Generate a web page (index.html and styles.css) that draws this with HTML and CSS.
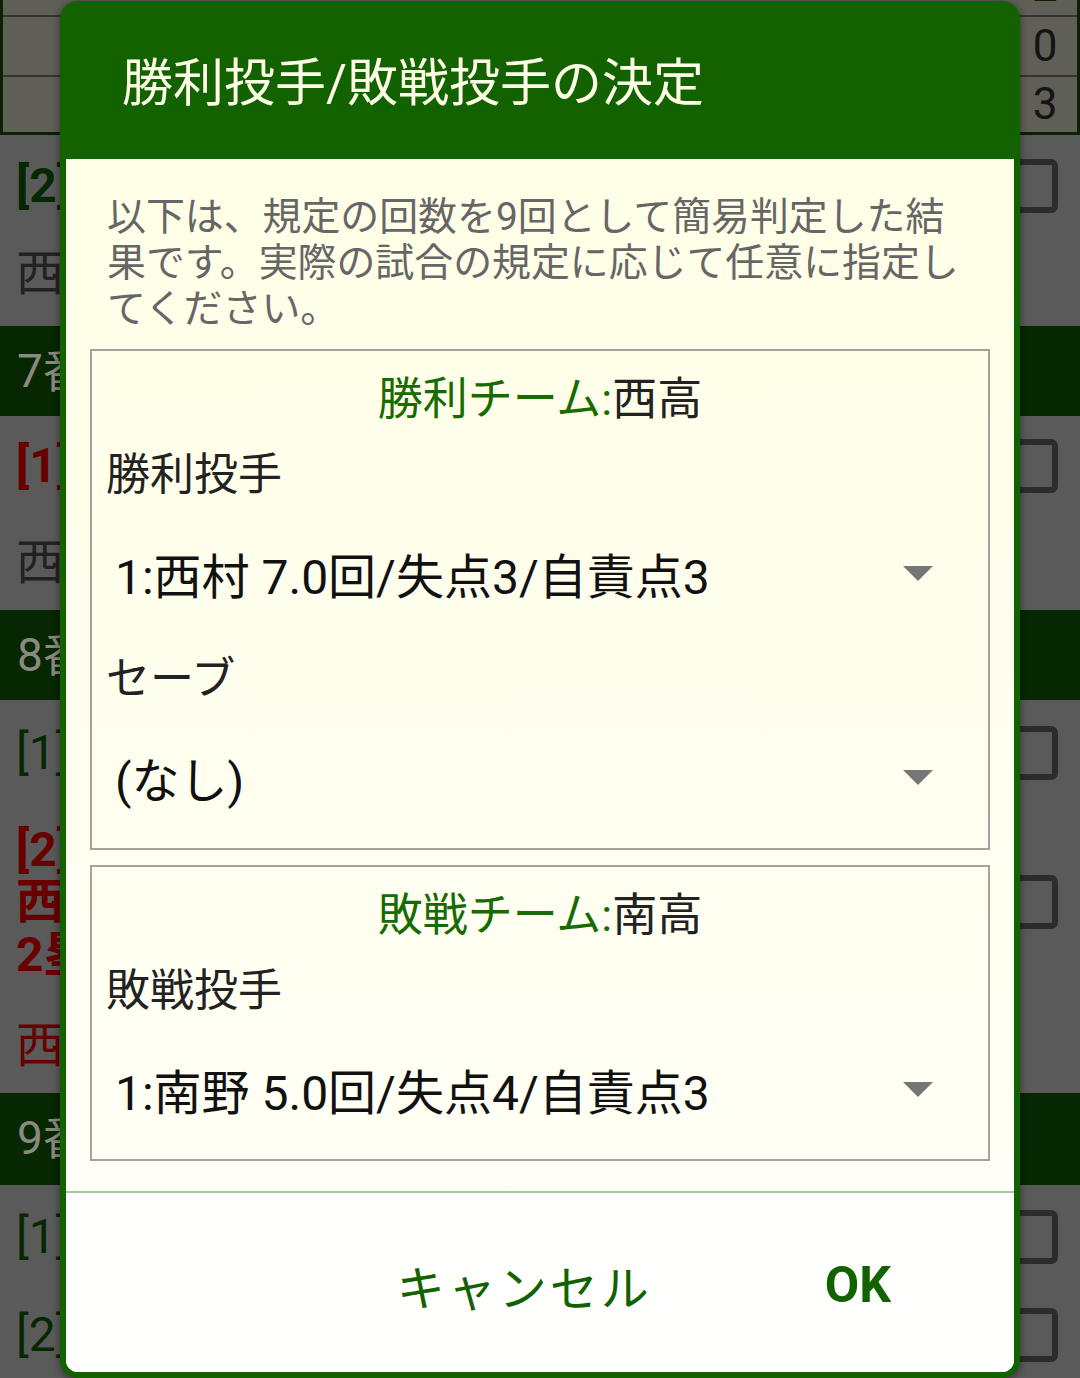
FILE: index.html
```html
<!DOCTYPE html>
<html lang="ja">
<head>
<meta charset="utf-8">
<title>勝利投手/敗戦投手の決定</title>
<link rel="stylesheet" href="styles.css">
</head>
<body>
<div class="screen">
  <div class="score">
    <div class="srow srow-top"><span class="cell-r"><span class="peek">2</span></span></div>
    <div class="srow srow-mid"><span class="cell-r">0</span></div>
    <div class="srow srow-bot"><span class="cell-r">3</span></div>
  </div>

  <div class="block block-a">
    <div class="line"><span class="t bold c-green">[2] 西村</span><span class="cb"></span></div>
    <div class="line mt-36"><span class="t c-dark">西高 投手</span></div>
  </div>
  <div class="band">7番 打者</div>

  <div class="block block-b">
    <div class="line"><span class="t bold c-red">[1] 南野</span><span class="cb"></span></div>
    <div class="line mt-45"><span class="t c-dark">西高 捕手</span></div>
  </div>
  <div class="band">8番 打者</div>

  <div class="block block-c">
    <div class="line"><span class="t c-green">[1] 西川</span><span class="cb"></span></div>
    <div class="line mt-45"><span class="t bold c-red">[2] 南田</span></div>
    <div class="line"><span class="t bold c-red">西高</span><span class="cb"></span></div>
    <div class="line mt-1"><span class="t bold c-red">2塁打</span></div>
    <div class="line mt-39"><span class="t c-red">西高 二塁</span></div>
  </div>
  <div class="band band-9">9番 打者</div>

  <div class="block block-d">
    <div class="line"><span class="t c-green">[1] 西山</span><span class="cb"></span></div>
    <div class="line mt-46"><span class="t c-green">[2] 南原</span><span class="cb"></span></div>
  </div>
</div>

<div class="dialog">
  <div class="dlg-title">勝利投手/敗戦投手の決定</div>
  <div class="dlg-body">
    <p class="msg">以下は、規定の回数を9回として簡易判定した結果です。実際の試合の規定に応じて任意に指定してください。</p>

    <div class="box box-1">
      <div class="box-head"><span class="win">勝利チーム:</span>西高</div>
      <div class="label">勝利投手</div>
      <div class="select"><span>1:西村 7.0回/失点3/自責点3</span><span class="arrow"></span></div>
      <div class="label">セーブ</div>
      <div class="select"><span>(なし)</span><span class="arrow"></span></div>
    </div>

    <div class="box box-2">
      <div class="box-head"><span class="win">敗戦チーム:</span>南高</div>
      <div class="label">敗戦投手</div>
      <div class="select"><span>1:南野 5.0回/失点4/自責点3</span><span class="arrow"></span></div>
    </div>

    <div class="divider"></div>
    <div class="footer">
      <span class="btn btn-cancel">キャンセル</span>
      <span class="btn btn-ok">OK</span>
    </div>
  </div>
</div>
</body>
</html>
```
FILE: styles.css
```css
* {
  box-sizing: border-box;
  margin: 0;
  padding: 0;
}

html, body {
  width: 1080px;
  height: 1378px;
  overflow: hidden;
}

body {
  position: relative;
  background: #5a5a5a;
  font-family: Roboto, "Noto Sans CJK JP", sans-serif;
}

/* ---------- background app screen (dimmed) ---------- */
.score {
  height: 135px;
  background: #5f5e57;
  border: 3px solid #0b2100;
  border-top: 0;
}

.srow {
  display: flex;
  justify-content: flex-end;
  border-bottom: 2px solid #343430;
  overflow: hidden;
}

.srow-top { height: 17px; }
.srow-mid { height: 60px; }
.srow-bot { height: 55px; border-bottom: 0; }

.cell-r {
  width: 60px;
  padding-right: 4px;
  text-align: center;
  font-size: 44px;
  line-height: 58px;
  color: #141414;
}

.srow-bot .cell-r { line-height: 55px; }

.peek {
  display: block;
  font-weight: 700;
  line-height: 44px;
  margin-top: -36px;
  color: #0b2100;
}

.block { overflow: hidden; }
.block-a { height: 191px; padding-top: 25px; }
.block-b { height: 194px; padding-top: 24px; }
.block-c { height: 393px; padding-top: 27px; }
.block-d { height: 200px; padding-top: 26px; }

.line {
  display: flex;
  justify-content: space-between;
  align-items: center;
  height: 52px;
  padding: 0 22px 0 16px;
}

.mt-1 { margin-top: 1px; }
.mt-36 { margin-top: 36px; }
.mt-39 { margin-top: 39px; }
.mt-45 { margin-top: 45px; }
.mt-46 { margin-top: 46px; }

.t {
  font-size: 48px;
  line-height: 52px;
  white-space: nowrap;
}

.bold { font-weight: 700; }
.c-green { color: #062800; }
.c-red { color: #680000; }
.c-dark { color: #222222; }

.cb {
  width: 52px;
  height: 54px;
  border: 6px solid #2c2c2c;
  border-radius: 7px;
}

.band {
  height: 90px;
  background: #062700;
  color: #8a8a7e;
  font-size: 46px;
  line-height: 90px;
  padding-left: 17px;
}

.band-9 { height: 92px; }

/* ---------- dialog ---------- */
.dialog {
  position: absolute;
  left: 60px;
  top: 1px;
  width: 960px;
  height: 1377px;
  background: #126300;
  border-radius: 18px;
  padding: 0 6px 6px;
  display: flex;
  flex-direction: column;
  box-shadow: 0 2px 8px rgba(0, 0, 0, 0.45);
}

.dlg-title {
  height: 156px;
  flex: none;
  display: flex;
  align-items: center;
  padding-left: 56px;
  margin-bottom: 2px;
  font-size: 51px;
  color: #fffde7;
  white-space: nowrap;
}

.dlg-body {
  flex: 1;
  display: flex;
  flex-direction: column;
  background: linear-gradient(#fffee6, #fffff8);
  border-radius: 0 0 12px 12px;
  overflow: hidden;
}

.msg {
  padding: 35px 45px 0 41px;
  font-size: 38.9px;
  line-height: 46px;
  color: #666666;
}

.box {
  margin: 17px 24px 0;
  border: 2px solid #a3a39b;
  padding: 8px 0 9px;
}

.box-2 {
  margin-top: 15px;
  padding-bottom: 8px;
}

.box-head {
  height: 72px;
  display: flex;
  align-items: center;
  justify-content: center;
  font-size: 45px;
  color: #222222;
}

.win { color: #176b00; }

.label {
  height: 80px;
  display: flex;
  align-items: center;
  padding-left: 14px;
  font-size: 44px;
  color: #222222;
}

.select {
  height: 124px;
  display: flex;
  align-items: center;
  justify-content: space-between;
  padding: 0 55px 0 23px;
  font-size: 48px;
  color: #111111;
}

.arrow {
  width: 0;
  height: 0;
  border-left: 15px solid transparent;
  border-right: 15px solid transparent;
  border-top: 15px solid #767676;
}

.divider {
  margin-top: 30px;
  height: 2px;
  flex: none;
  background: #a4c8a1;
}

.footer {
  flex: 1;
  display: flex;
  justify-content: flex-end;
  align-items: center;
  gap: 96px;
  padding: 4px 83px 0 0;
  background: #fffffe;
}

.btn {
  padding: 0 40px;
  color: #126300;
  white-space: nowrap;
}

.btn-cancel {
  font-size: 48px;
  letter-spacing: 3px;
  margin-right: -3px;
}

.btn-ok {
  font-size: 50px;
  font-weight: 700;
}
```
